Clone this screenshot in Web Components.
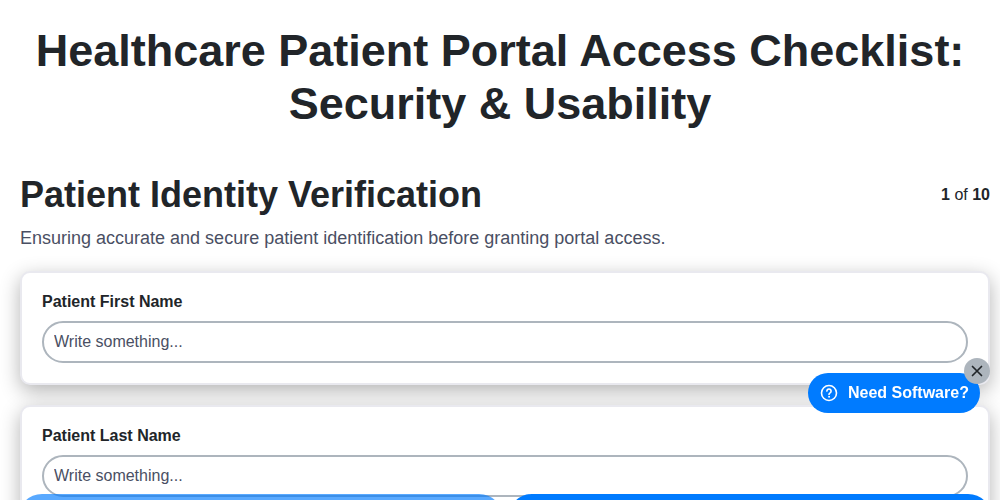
<!DOCTYPE html>
<html>
<head>
<title>Healthcare Patient Portal Access Checklist</title>
<style>
    html, body { margin: 0; height: 500px; overflow: hidden; background: #fff; }
    body { font-family: "Liberation Sans", Arial, sans-serif; color: #212529; }
</style>
</head>
<body>
<checklist-page heading="Healthcare Patient Portal Access Checklist: Security &amp; Usability">
    <section-header title="Patient Identity Verification" current="1" total="10">
        Ensuring accurate and secure patient identification before granting portal access.
    </section-header>
    <text-question label="Patient First Name"></text-question>
    <text-question label="Patient Last Name"></text-question>
</checklist-page>
<software-bubble></software-bubble>
<nav-buttons></nav-buttons>
<script>
    class ChecklistPage extends HTMLElement {
        constructor() {
            super();
            const shadow = this.attachShadow({ mode: 'open' });
            shadow.innerHTML = `
            <style>
                :host { display: block; padding: 24px 10px 0 20px; }
                h1 { margin: 0 10px 43px 0; font-size: 45px; line-height: 53px; font-weight: 700; text-align: center; color: #212529; }
                #list { display: flex; flex-direction: column; gap: 20px; }
            </style>
            <h1></h1>
            <div id="list"><slot></slot></div>
            `;
            shadow.querySelector('h1').textContent = this.getAttribute('heading');
        }
    }
    customElements.define('checklist-page', ChecklistPage);

    class SectionHeader extends HTMLElement {
        constructor() {
            super();
            const shadow = this.attachShadow({ mode: 'open' });
            shadow.innerHTML = `
            <style>
                :host { display: block; margin-bottom: 2px; }
                #top { display: flex; justify-content: space-between; align-items: flex-start; }
                h2 { margin: 0; font-size: 36px; line-height: 43px; font-weight: 700; color: #212529; }
                #count { font-size: 16px; line-height: 18px; margin-top: 13px; color: #212529; }
                p { margin: 11px 0 0; font-size: 18px; line-height: 22px; color: #4a4f63; }
            </style>
            <div id="top">
                <h2></h2>
                <div id="count"><b id="cur"></b> of <b id="tot"></b></div>
            </div>
            <p><slot></slot></p>
            `;
            shadow.querySelector('h2').textContent = this.getAttribute('title');
            shadow.querySelector('#cur').textContent = this.getAttribute('current');
            shadow.querySelector('#tot').textContent = this.getAttribute('total');
        }
    }
    customElements.define('section-header', SectionHeader);

    class TextQuestion extends HTMLElement {
        constructor() {
            super();
            const shadow = this.attachShadow({ mode: 'open' });
            shadow.innerHTML = `
            <style>
                :host {
                    display: block;
                    background: #fff;
                    border: 2px solid #e9e9ef;
                    border-radius: 10px;
                    padding: 20px;
                    box-shadow: 0 6px 20px rgba(0, 0, 0, .3);
                }
                label { display: block; font-size: 16px; line-height: 18px; font-weight: 700; color: #212529; margin-bottom: 10px; }
                input {
                    display: block;
                    box-sizing: border-box;
                    width: 100%;
                    height: 42px;
                    padding: 0 10px;
                    border: 2px solid #adb5bd;
                    border-radius: 21px;
                    outline: none;
                    background: #fff;
                    font: 16px "Liberation Sans", Arial, sans-serif;
                    color: #4a4f63;
                }
                input::placeholder { color: #4a4f63; opacity: 1; }
            </style>
            <label></label>
            <input type="text" placeholder="Write something...">
            `;
            shadow.querySelector('label').textContent = this.getAttribute('label');
        }
    }
    customElements.define('text-question', TextQuestion);

    class SoftwareBubble extends HTMLElement {
        constructor() {
            super();
            const shadow = this.attachShadow({ mode: 'open' });
            shadow.innerHTML = `
            <style>
                :host { position: fixed; left: 808px; top: 373px; display: block; }
                #pill {
                    display: flex; align-items: center; gap: 10px;
                    box-sizing: border-box; width: 172px; height: 40px; padding: 0 11px 0 12px;
                    background: #007bff; color: #fff; border-radius: 20px;
                    font-size: 16px; font-weight: 700; white-space: nowrap;
                }
                svg.help { width: 18px; height: 18px; flex: none; }
                #close {
                    position: absolute; left: 156px; top: -15px;
                    width: 26px; height: 26px; border-radius: 50%;
                    background: #adb5bd; display: flex; align-items: center; justify-content: center;
                }
                #close svg { width: 12px; height: 12px; }
            </style>
            <div id="pill">
                <svg class="help" viewBox="0 0 18 18" fill="none" stroke="#fff" stroke-width="1.6" stroke-linecap="round">
                    <circle cx="9" cy="9" r="7.5"/>
                    <path d="M6.9 7.1a2.1 2.1 0 1 1 3.2 1.8c-.7.4-1.1.8-1.1 1.5"/>
                    <circle cx="9" cy="12.8" r=".5" fill="#fff" stroke-width="1"/>
                </svg>
                <span>Need Software?</span>
            </div>
            <div id="close">
                <svg viewBox="0 0 12 12" fill="none" stroke="#212529" stroke-width="1.7" stroke-linecap="round"><path d="M1.5 1.5l9 9M10.5 1.5l-9 9"/></svg>
            </div>
            `;
        }
    }
    customElements.define('software-bubble', SoftwareBubble);

    class NavButtons extends HTMLElement {
        constructor() {
            super();
            const shadow = this.attachShadow({ mode: 'open' });
            shadow.innerHTML = `
            <style>
                :host {
                    position: fixed; left: 18px; right: 8px; top: 494px;
                    display: grid; grid-template-columns: 1fr 1fr; gap: 5px;
                }
                button {
                    height: 48px; border: 0; border-radius: 24px; padding: 0;
                    background: #007bff;
                }
                #prev { opacity: .65; }
            </style>
            <button id="prev"></button>
            <button id="next"></button>
            `;
        }
    }
    customElements.define('nav-buttons', NavButtons);
</script>
</body>
</html>
